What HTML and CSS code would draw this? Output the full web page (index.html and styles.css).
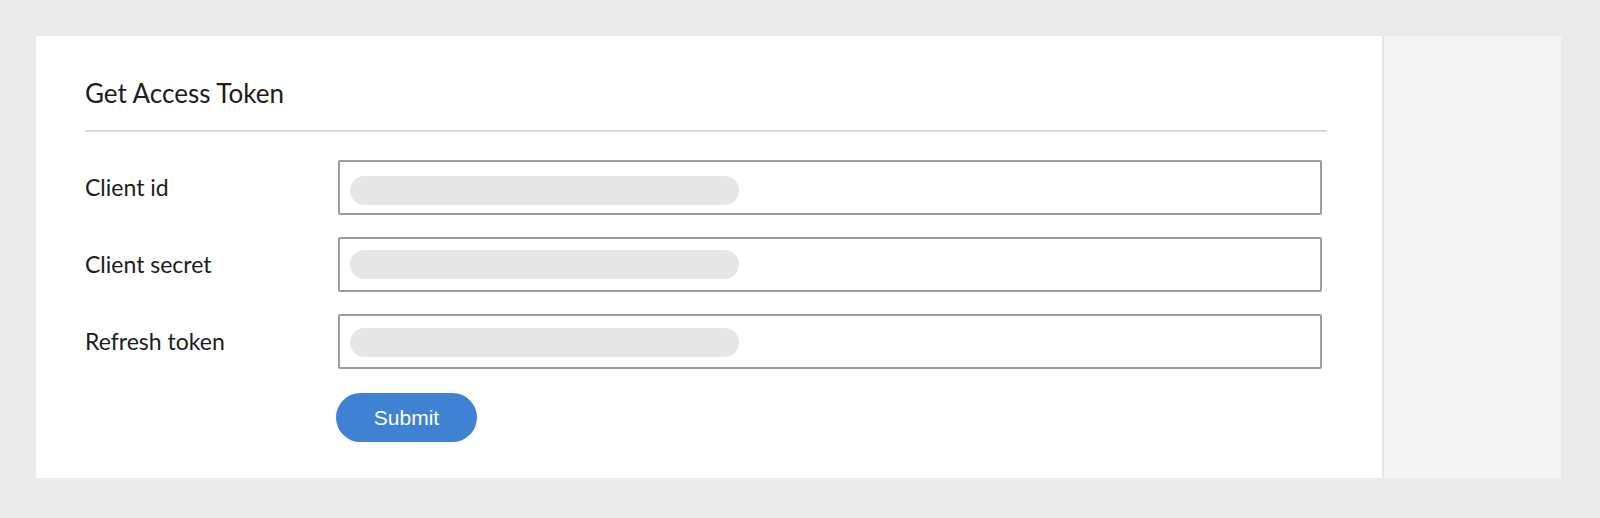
FILE: index.html
```html
<!DOCTYPE html>
<html>
<head>
<meta charset="utf-8">
<link rel="stylesheet" href="styles.css">
</head>
<body>
<div class="frame">
  <main class="panel">
    <h2 class="title">Get Access Token</h2>
    <form class="form">
      <div class="row">
        <label class="label">Client id</label>
        <div class="field"><span class="ph ph-low"></span></div>
      </div>
      <div class="row">
        <label class="label">Client secret</label>
        <div class="field"><span class="ph"></span></div>
      </div>
      <div class="row">
        <label class="label">Refresh token</label>
        <div class="field"><span class="ph ph-mid"></span></div>
      </div>
      <div class="actions">
        <button type="button" class="submit">Submit</button>
      </div>
    </form>
  </main>
  <aside class="side"></aside>
</div>
</body>
</html>
```
FILE: styles.css
```css
html, body {
  margin: 0;
  padding: 0;
  background: #eaeaea;
}
body {
  font-family: "Lato", "Liberation Sans", sans-serif;
  color: #1c1c1c;
}
.frame {
  display: flex;
  margin: 36px 39px 0 36px;
  height: 442px;
}
.panel {
  flex: 1;
  background: #ffffff;
  padding: 0 55px 0 49px;
  border-right: 2px solid #e6e6e6;
}
.side {
  width: 177px;
  background: #f4f4f4;
}
.title {
  margin: 0;
  padding-top: 41px;
  padding-bottom: 20px;
  font-size: 26px;
  font-weight: 400;
  line-height: 33px;
  border-bottom: 2px solid #d9d9d9;
}
.form {
  display: flex;
  flex-direction: column;
  gap: 22px;
  padding-top: 28px;
}
.row {
  display: flex;
  align-items: center;
  padding-right: 5px;
}
.label {
  width: 253px;
  font-size: 23px;
  margin-top: -2px;
}
.field {
  flex: 1;
  height: 51px;
  border: 2px solid #9c9c9c;
  border-radius: 2px;
  box-sizing: content-box;
  display: flex;
  align-items: center;
  padding-left: 10px;
}
.ph {
  width: 389px;
  height: 29px;
  border-radius: 15px;
  background: #e6e6e6;
}
.ph-low {
  margin-top: 6px;
}
.ph-mid {
  margin-top: 2px;
}
.actions {
  padding-left: 251px;
  padding-top: 2px;
}
.submit {
  width: 141px;
  height: 49px;
  border: none;
  border-radius: 25px;
  background: #3f82d3;
  color: #ffffff;
  font-family: "Liberation Sans", Arial, sans-serif;
  font-size: 21px;
  padding: 0;
}
```
